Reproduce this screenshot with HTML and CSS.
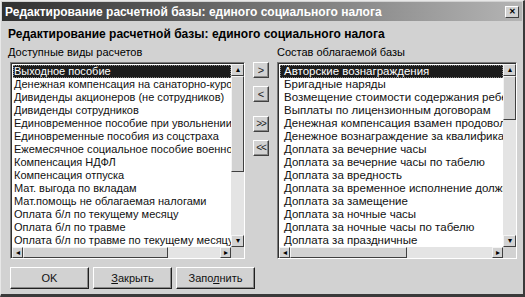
FILE: index.html
```html
<!DOCTYPE html>
<html lang="ru">
<head>
    <meta charset="UTF-8">
    <title>Редактирование расчетной базы</title>
    <link rel="stylesheet" href="styles.css">
</head>
<body>
    <div class="window">
        <div class="titlebar">
            <span class="title">Редактирование расчетной базы: единого социального налога</span>
            <span class="close">&#x2715;</span>
        </div>
        <div class="content">
            <div class="heading">Редактирование расчетной базы: единого социального налога</div>
            <div class="columns">
                <div class="col col-left">
                    <div class="label">Доступные виды расчетов</div>
                    <div class="listbox">
                        <div class="items">
                            <div class="item selected">Выходное пособие</div>
                            <div class="item">Денежная компенсация на санаторно-курортное лечение</div>
                            <div class="item">Дивиденды акционеров (не сотрудников)</div>
                            <div class="item">Дивиденды сотрудников</div>
                            <div class="item">Единовременное пособие при увольнении</div>
                            <div class="item">Единовременные пособия из соцстраха</div>
                            <div class="item">Ежемесячное социальное пособие военнослужащим</div>
                            <div class="item">Компенсация НДФЛ</div>
                            <div class="item">Компенсация отпуска</div>
                            <div class="item">Мат. выгода по вкладам</div>
                            <div class="item">Мат.помощь не облагаемая налогами</div>
                            <div class="item">Оплата б/л по текущему месяцу</div>
                            <div class="item">Оплата б/л по травме</div>
                            <div class="item">Оплата б/л по травме по текущему месяцу</div>
                        </div>
                        <div class="vscroll">
                            <span class="arrow">&#9652;</span>
                            <span class="thumb thumb-left"></span>
                            <span class="track"></span>
                            <span class="arrow">&#9662;</span>
                        </div>
                        <div class="hscroll">
                            <span class="arrow">&#9666;</span>
                            <span class="thumb hthumb-left"></span>
                            <span class="track"></span>
                            <span class="arrow">&#9656;</span>
                        </div>
                        <div class="corner"></div>
                    </div>
                </div>
                <div class="movers">
                    <button class="move">&gt;</button>
                    <button class="move">&lt;</button>
                    <button class="move move-gap double">&gt;&gt;</button>
                    <button class="move double">&lt;&lt;</button>
                </div>
                <div class="col col-right">
                    <div class="label">Состав облагаемой базы</div>
                    <div class="listbox">
                        <div class="items items-right">
                            <div class="item selected">Авторские вознаграждения</div>
                            <div class="item">Бригадные наряды</div>
                            <div class="item">Возмещение стоимости содержания ребенка</div>
                            <div class="item">Выплаты по лицензионным договорам</div>
                            <div class="item">Денежная компенсация взамен продовольствия</div>
                            <div class="item">Денежное вознаграждение за квалификацию</div>
                            <div class="item">Доплата за вечерние часы</div>
                            <div class="item">Доплата за вечерние часы по табелю</div>
                            <div class="item">Доплата за вредность</div>
                            <div class="item">Доплата за временное исполнение должности</div>
                            <div class="item">Доплата за замещение</div>
                            <div class="item">Доплата за ночные часы</div>
                            <div class="item">Доплата за ночные часы по табелю</div>
                            <div class="item">Доплата за праздничные</div>
                        </div>
                        <div class="vscroll">
                            <span class="arrow">&#9652;</span>
                            <span class="thumb thumb-right"></span>
                            <span class="track"></span>
                            <span class="arrow">&#9662;</span>
                        </div>
                        <div class="hscroll">
                            <span class="arrow">&#9666;</span>
                            <span class="thumb hthumb-right"></span>
                            <span class="track"></span>
                            <span class="arrow">&#9656;</span>
                        </div>
                        <div class="corner"></div>
                    </div>
                </div>
            </div>
            <div class="footer">
                <button class="btn">OK</button>
                <button class="btn"><u>З</u>акрыть</button>
                <button class="btn">Запо<u>л</u>нить</button>
            </div>
        </div>
    </div>
</body>
</html>
```

FILE: styles.css
```css
* {
    box-sizing: border-box;
}
body {
    margin: 0;
    background-color: #d2d2d2;
    font-family: "Liberation Sans", Arial, sans-serif;
}
.window {
    width: 525px;
    height: 297px;
    background-color: #d2d2d2;
    border-top: 1px solid #e8e8e8;
    border-left: 1px solid #e8e8e8;
    border-right: 2px solid #3a3a3a;
    border-bottom: 3px solid #3a3a3a;
    display: flex;
    flex-direction: column;
}
.titlebar {
    height: 19px;
    margin: 1px 1px 0 1px;
    background: linear-gradient(to right, #303030, #6c6c6c 45%, #b4b4b4);
    display: flex;
    align-items: center;
    justify-content: space-between;
    padding: 0 3px 0 3px;
}
.title {
    color: #fff;
    font-weight: bold;
    font-size: 12px;
}
.close {
    width: 14px;
    height: 12px;
    background-color: #d2d2d2;
    border-top: 1px solid #fff;
    border-left: 1px solid #fff;
    border-right: 1px solid #404040;
    border-bottom: 1px solid #404040;
    font-size: 8px;
    font-weight: bold;
    line-height: 10px;
    text-align: center;
    color: #000;
}
.content {
    flex: 1;
    padding: 5px 6px 0 6px;
    display: flex;
    flex-direction: column;
}
.heading {
    font-weight: bold;
    font-size: 12px;
    line-height: 16px;
    padding-left: 1px;
}
.columns {
    display: flex;
    margin-top: 3px;
}
.col {
    display: flex;
    flex-direction: column;
}
.col-left {
    width: 238px;
    padding-left: 3px;
}
.col-right {
    width: 240px;
}
.label {
    font-size: 11px;
    line-height: 14px;
    margin-left: -2px;
    margin-bottom: 3px;
}
.col-right .label {
    margin-left: 0;
}
.listbox {
    height: 197px;
    border-top: 1px solid #7a7a7a;
    border-left: 1px solid #7a7a7a;
    border-right: 1px solid #fff;
    border-bottom: 1px solid #fff;
    box-shadow: inset 1px 1px 0 #303030;
    padding: 1px 0 0 1px;
    display: grid;
    grid-template-columns: 1fr 13px;
    grid-template-rows: 183px 11px;
    background-color: #fff;
}
.items {
    overflow: hidden;
    padding: 1px 0 0 1px;
    min-width: 0;
}
.item {
    height: 13px;
    line-height: 13px;
    font-size: 11px;
    white-space: nowrap;
    padding-left: 1px;
    color: #111;
}
.items-right .item {
    font-size: 11.5px;
    padding-left: 4px;
}
.item.selected {
    background-color: #1c1c1c;
    color: #fff;
    outline: 1px dotted #888;
    outline-offset: -1px;
}
.vscroll {
    display: flex;
    flex-direction: column;
    background-color: #d2d2d2;
    min-height: 0;
}
.hscroll {
    display: flex;
    background-color: #d2d2d2;
    min-width: 0;
}
.track {
    flex: 1;
    background-color: #e4e4e4;
}
.arrow, .thumb, .corner {
    background-color: #d2d2d2;
}
.arrow, .thumb {
    flex-shrink: 0;
    border-top: 1px solid #f4f4f4;
    border-left: 1px solid #f4f4f4;
    border-right: 1px solid #404040;
    border-bottom: 1px solid #404040;
    color: #000;
}
.vscroll .arrow {
    height: 12px;
    font-size: 8px;
    line-height: 10px;
    text-align: center;
}
.hscroll .arrow {
    width: 11px;
    font-size: 8px;
    line-height: 9px;
    text-align: center;
}
.thumb-left {
    height: 96px;
}
.thumb-right {
    height: 44px;
}
.hthumb-left {
    width: 145px;
}
.hthumb-right {
    width: 117px;
}
.movers {
    width: 32px;
    display: flex;
    flex-direction: column;
    align-items: center;
    padding-top: 17px;
}
.move {
    width: 16px;
    height: 16px;
    padding: 0;
    margin-bottom: 8px;
    font-family: "Liberation Sans", Arial, sans-serif;
    font-size: 11px;
    line-height: 12px;
    background-color: #d2d2d2;
    border-top: 1px solid #fff;
    border-left: 1px solid #fff;
    border-right: 1px solid #404040;
    border-bottom: 1px solid #404040;
    box-shadow: inset -1px -1px 0 #8a8a8a;
    color: #222;
}
.move.double {
    font-size: 10px;
    letter-spacing: -1px;
}
.move-gap {
    margin-top: 6px;
}
.footer {
    display: flex;
    gap: 4px;
    margin-top: 8px;
    padding-left: 3px;
}
.btn {
    width: 79px;
    height: 22px;
    padding: 0;
    font-family: "Liberation Sans", Arial, sans-serif;
    font-size: 11px;
    background-color: #d2d2d2;
    border-top: 1px solid #fff;
    border-left: 1px solid #fff;
    border-right: 1px solid #202020;
    border-bottom: 1px solid #202020;
    box-shadow: inset -1px -1px 0 #8a8a8a;
    color: #111;
}
```
